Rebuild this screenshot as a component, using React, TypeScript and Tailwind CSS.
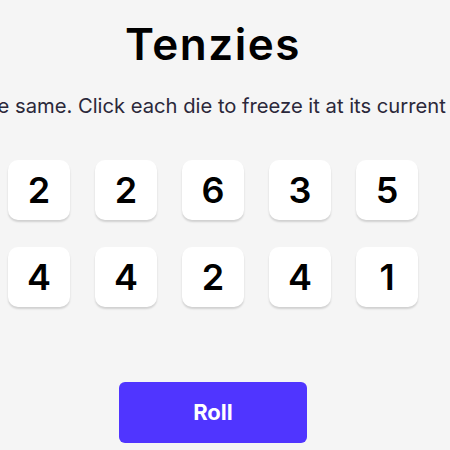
import React from "react";

const row1 = [2, 2, 6, 3, 5];
const row2 = [4, 4, 2, 4, 1];

function Die({ value }: { value: number }) {
  return (
    <div className="w-[62px] h-[60px] rounded-[10px] bg-white shadow-[0_2px_2px_rgba(0,0,0,0.15)] flex items-center justify-center text-[36px] font-semibold text-black">
      {value}
    </div>
  );
}

export default function App() {
  return (
    <div className="w-[450px] h-[450px] bg-[#f5f5f5] overflow-hidden" style={{ fontFamily: "Inter, sans-serif" }}>
      <div className="w-[426px] flex flex-col items-center">
        <h1 className="mt-[18px] text-[44px] leading-[53px] font-semibold tracking-[0.035em] text-black">Tenzies</h1>
        <p className="mt-[23px] whitespace-nowrap text-[20.2px] leading-[24px] text-[#2b283a]">
          Roll until all dice are the same. Click each die to freeze it at its current value between rolls.
        </p>
        <div className="mt-[42px] grid grid-cols-5 gap-x-[25px] gap-y-[27px]">
          {[...row1, ...row2].map((v, i) => (
            <Die key={i} value={v} />
          ))}
        </div>
        <button className="mt-[75px] w-[188px] h-[61px] rounded-[6px] bg-[#5035ff] text-white text-[22px] font-bold">
          Roll
        </button>
      </div>
    </div>
  );
}
